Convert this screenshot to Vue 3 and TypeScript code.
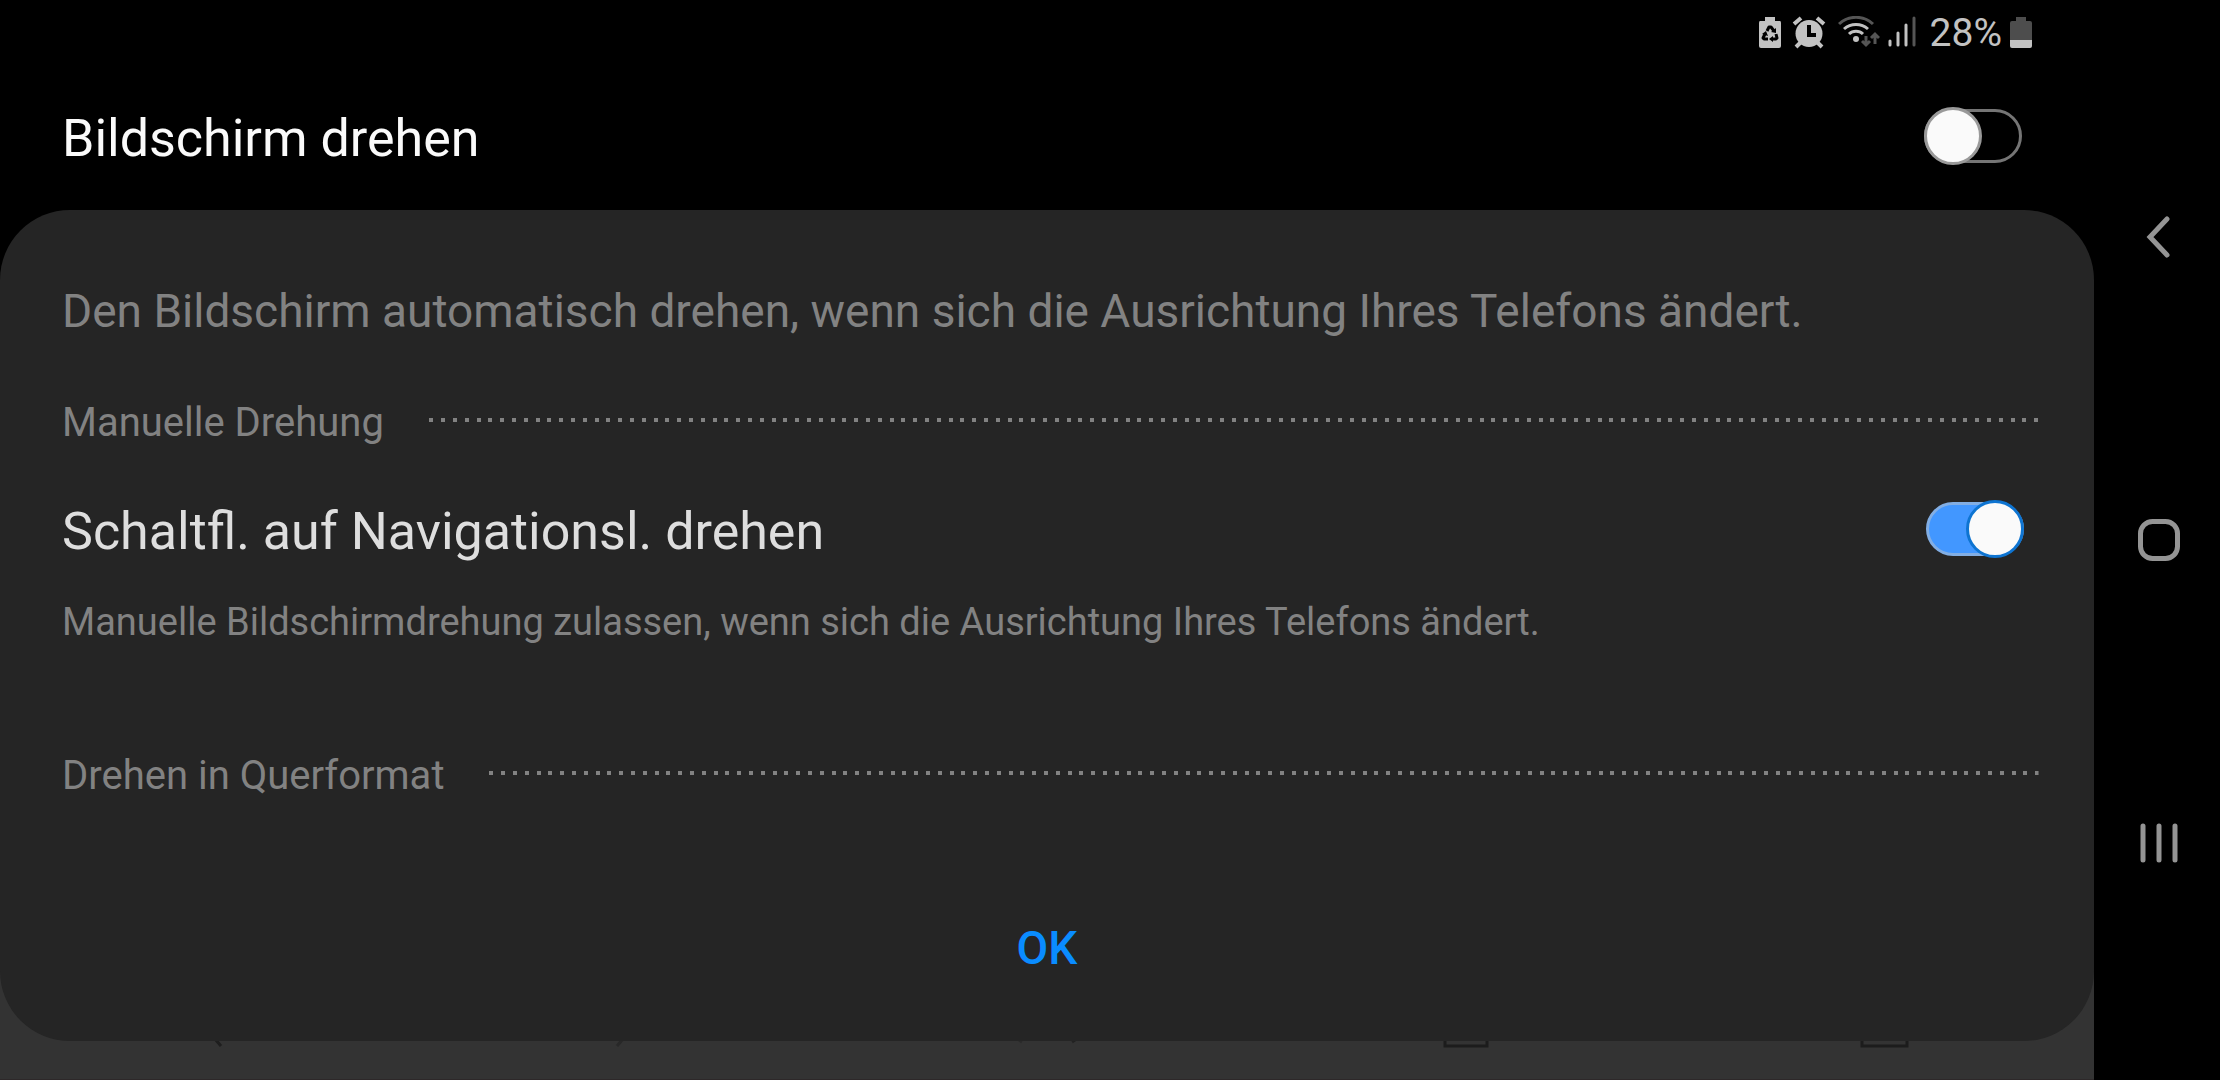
<script setup lang="ts">
import { ref } from 'vue'

const autoRotate = ref(false)
const navButton = ref(true)
</script>

<template>
  <div class="screen">
    <main class="content">
      <div class="statusbar">
        <svg class="icon" width="24" height="34" viewBox="0 0 24 34" aria-hidden="true">
          <path d="M7 1h10v4h5q1 0 1 2v23q0 2-2 2H3q-2 0-2-2V7q0-2 1-2h5z" fill="#c2c2c2" />
          <g fill="none" stroke="#000" stroke-width="3" stroke-linejoin="round">
            <path d="M9 15l2-4h2l3 4" />
            <path d="M18 18l1 4-1 1h-3" />
            <path d="M10 23H6l-1-1 2-4" />
          </g>
          <path d="M18 12v5l-5-1zM15 20v6l-4-3zM4 18l4-3 2 5z" fill="#000" />
        </svg>
        <svg class="icon alarm" width="34" height="34" viewBox="0 0 34 34" aria-hidden="true">
          <circle cx="17" cy="17.500" r="13.500" fill="#c2c2c2" />
          <g stroke="#c2c2c2" stroke-width="4">
            <path d="M2 8l7-6M25 2l7 6M9 26l-5 5M25 26l5 5" />
          </g>
          <path d="M17 9v10h7" fill="none" stroke="#000" stroke-width="4" />
        </svg>
        <svg class="icon wifi" width="42" height="34" viewBox="0 0 42 34" aria-hidden="true">
          <g fill="none" stroke-width="3">
            <path d="M1 8a25 25 0 0 1 34 0" stroke="#555" />
            <path d="M6 13a18 18 0 0 1 24 0" stroke="#c2c2c2" />
            <path d="M11 18a10 10 0 0 1 14 0" stroke="#c2c2c2" />
            <path d="M28 20v9M24 25l4 4 4-4M37 28V18M33 22l4-4 4 4" stroke="#555" />
          </g>
          <circle cx="18" cy="23" r="3" fill="#c2c2c2" />
        </svg>
        <svg class="icon" width="28" height="34" viewBox="0 0 28 34" aria-hidden="true">
          <g stroke-width="3" stroke-linecap="round" stroke="#c2c2c2">
            <path d="M2 25v4M10 17v12M18 9v20" />
            <path d="M26 2v27" stroke="#555" />
          </g>
        </svg>
        <span class="percent">28%</span>
        <svg class="icon" width="22" height="34" viewBox="0 0 22 34" aria-hidden="true">
          <path d="M6 1h10v4h4q2 0 2 2v17H0V7q0-2 2-2h4z" fill="#4d4d4d" />
          <path d="M0 24h22v6q0 2-2 2H2q-2 0-2-2z" fill="#c2c2c2" />
        </svg>
      </div>

      <div class="header">
        <label class="title bright" for="auto-rotate">Bildschirm drehen</label>
        <input id="auto-rotate" v-model="autoRotate" class="switch" type="checkbox" role="switch" />
      </div>

      <div class="backdrop">
        <section class="panel">
          <p class="description">Den Bildschirm automatisch drehen, wenn sich die Ausrichtung Ihres Telefons ändert.</p>

          <div class="section">
            <h2>Manuelle Drehung</h2>
            <svg class="dots" aria-hidden="true"><line x1="0" y1="2" x2="100%" y2="2" /></svg>
          </div>

          <div class="setting">
            <label class="title" for="nav-button">Schaltfl. auf Navigationsl. drehen</label>
            <input id="nav-button" v-model="navButton" class="switch" type="checkbox" role="switch" />
          </div>
          <p class="hint">Manuelle Bildschirmdrehung zulassen, wenn sich die Ausrichtung Ihres Telefons ändert.</p>

          <div class="section landscape">
            <h2>Drehen in Querformat</h2>
            <svg class="dots" aria-hidden="true"><line x1="0" y1="2" x2="100%" y2="2" /></svg>
          </div>

          <button class="ok" type="button">OK</button>
        </section>
      </div>

      <!-- lower edge of the browser toolbar that the dialog covers -->
      <div class="toolbar" aria-hidden="true">
        <svg width="60" height="8" viewBox="0 0 60 8"><path d="M36-2l6 7" stroke="#1e1e1e" /></svg>
        <svg width="60" height="8" viewBox="0 0 60 8"><path d="M25-2l-6 7" stroke="#282828" /></svg>
        <svg width="60" height="8" viewBox="0 0 60 8"><path d="M2-1l3 2" stroke="#2a2a2a" /><path d="M58-1l-3 2" stroke="#222" /></svg>
        <svg width="60" height="8" viewBox="0 0 60 8"><path d="M9-2v7h42v-7" stroke="#1c1c1c" /></svg>
        <svg width="60" height="8" viewBox="0 0 60 8"><path d="M7-2v7h45v-7" stroke="#1c1c1c" /></svg>
      </div>
    </main>

    <nav class="navbar">
      <button type="button" aria-label="Zurück">
        <svg width="44" height="44" viewBox="0 0 44 44"><path d="M30 4L13 22l17 18" stroke-width="5" stroke-linecap="round" /></svg>
      </button>
      <button type="button" aria-label="Startseite">
        <svg width="44" height="44" viewBox="0 0 44 44"><rect x="3.500" y="3.500" width="37" height="37" rx="12" stroke-width="5" /></svg>
      </button>
      <button type="button" aria-label="Letzte Apps">
        <svg width="44" height="44" viewBox="0 0 44 44"><path d="M6 5v34M22 5v34M38 5v34" stroke-width="5" stroke-linecap="round" /></svg>
      </button>
    </nav>
  </div>
</template>

<style>
body {
  background: #000;
}
</style>

<style scoped>
.screen {
  display: flex;
  min-height: 100vh;
  background: #000;
  color: #828282;
  font-family: Roboto, "Liberation Sans", sans-serif;
}

.content {
  display: flex;
  flex: 1;
  flex-direction: column;
  min-width: 0;
}

.statusbar {
  display: flex;
  align-items: center;
  justify-content: flex-end;
  height: 66px;
  padding-right: 62px;
  box-sizing: border-box;
}

.icon {
  flex: none;
  margin-right: 10px;
}

.icon:last-child {
  margin-right: 0;
}

.icon.alarm {
  margin-right: 12px;
}

.icon.wifi {
  margin-right: 8px;
}

.percent {
  margin: 0 8px 0 4px;
  color: #c2c2c2;
  font-size: 39px;
  line-height: 48px;
}

.header,
.setting {
  display: flex;
  align-items: center;
  justify-content: space-between;
}

.header {
  height: 144px;
  padding: 2px 72px 0 62px;
  box-sizing: border-box;
}

.title {
  color: #dedede;
  font-size: 52px;
  line-height: 80px;
}

.title.bright {
  color: #fafafa;
}

.switch {
  position: relative;
  width: 98px;
  height: 58px;
  margin: 0 0 6px;
  appearance: none;
}

.switch::before {
  position: absolute;
  inset: 2px 0;
  border: 3px solid #757575;
  border-radius: 27px;
  content: "";
}

.switch::after {
  position: absolute;
  top: 0;
  left: 0;
  width: 52px;
  height: 52px;
  border: 3px solid #999;
  border-radius: 50%;
  background: #fafafa;
  content: "";
}

.switch:checked::before {
  border-color: #82aee4;
  background: #4297ff;
}

.switch:checked::after {
  right: 0;
  left: auto;
  border-color: #0e74d1;
}

.backdrop {
  background: linear-gradient(#000 50%, #333 50%);
}

.panel {
  display: flex;
  flex-direction: column;
  padding: 71px 0 53px;
  border-radius: 70px;
  background: #252525;
}

.description,
.hint,
h2 {
  margin: 0;
  font-weight: 400;
  line-height: 60px;
}

.description,
.hint {
  padding: 0 62px;
}

.description {
  font-size: 46px;
}

.section {
  display: flex;
  align-items: center;
  gap: 45px;
  margin-top: 52px;
  padding: 0 55px 0 62px;
}

.section.landscape {
  margin-top: 94px;
}

h2 {
  font-size: 40px;
}

.dots {
  flex: 1;
  min-width: 0;
  height: 4px;
  margin-bottom: 6px;
}

.dots line {
  stroke: #828282;
  stroke-width: 4;
  stroke-dasharray: 4 8 4 8 4 8 4 8 4 7;
}

.setting {
  margin: 39px 0 20px;
  padding: 0 70px 0 62px;
}

.hint {
  font-size: 38px;
}

.ok {
  align-self: center;
  width: 240px;
  height: 80px;
  margin-top: 102px;
  padding: 0;
  border: 0;
  background: none;
  color: #0a8cff;
  font: 500 46px/80px Roboto, "Liberation Sans", sans-serif;
}

.toolbar {
  display: grid;
  flex: 1;
  grid-template-columns: repeat(5, 1fr);
  align-items: start;
  justify-items: center;
  min-height: 39px;
  box-sizing: border-box;
  border-bottom: 1px solid #2d2829;
  background: #333;
}

.toolbar svg {
  display: block;
  fill: none;
  stroke-width: 3;
}

.navbar {
  display: flex;
  flex: none;
  flex-direction: column;
  width: 126px;
  padding: 86px 0;
  box-sizing: border-box;
}

.navbar button {
  display: flex;
  flex: 1;
  align-items: center;
  justify-content: center;
  padding: 0 0 0 4px;
  border: 0;
  background: none;
}

.navbar svg {
  fill: none;
  stroke: #949494;
}
</style>
